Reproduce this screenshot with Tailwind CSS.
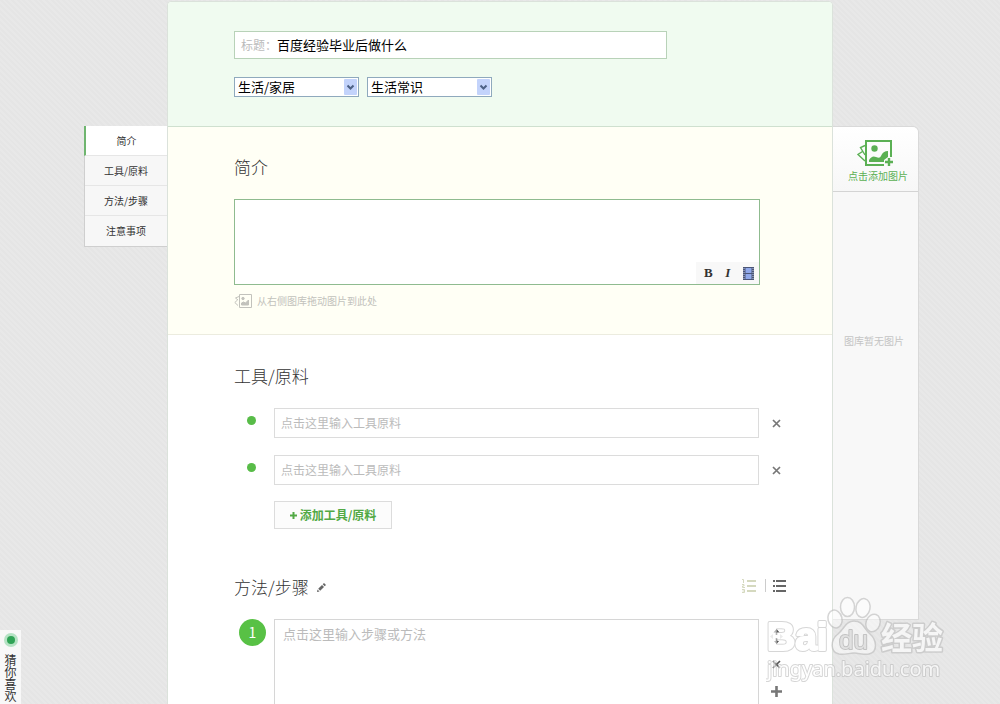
<!DOCTYPE html>
<html lang="zh-CN">
<head>
  <meta charset="UTF-8">
  <meta name="viewport" content="width=device-width, initial-scale=1.0">
  <title>百度经验</title>
  <script src="https://cdn.jsdelivr.net/npm/@tailwindcss/browser@4"></script>
</head>
<body class="min-h-screen bg-[#e6e6e6] bg-[repeating-linear-gradient(45deg,#e8e8e8_0px,#e8e8e8_2px,#e5e5e5_2px,#e5e5e5_4px)] font-['Noto_Sans_CJK_SC',sans-serif] text-xs text-[#333]">
  <div class="flex justify-center pl-[3px] pt-px">

    <!-- section nav -->
    <nav class="mt-[125px] w-[83px] shrink-0 self-start border-b border-l border-[#cfcfcf] bg-[#f7f7f7] text-[10px]">
      <a href="#intro" class="-ml-px flex h-[30px] items-center justify-center border-b border-l-2 border-b-[#e6e6e6] border-l-[#6fb56f] bg-white">简介</a>
      <a href="#tools" class="flex h-[30px] items-center justify-center border-b border-[#e6e6e6]">工具/原料</a>
      <a href="#steps" class="flex h-[30px] items-center justify-center border-b border-[#e6e6e6]">方法/步骤</a>
      <a href="#notes" class="flex h-[30px] items-center justify-center">注意事项</a>
    </nav>

    <!-- editor -->
    <main class="max-w-[666px] flex-1 rounded-t border border-[#dbe2db] bg-white">
      <header class="h-[125px] rounded-t border-b border-[#cfe0cf] bg-[#f0fbf0] pl-[66px] pr-[72px] pt-[29px]">
        <div class="flex h-[28px] w-full max-w-[433px] items-center border border-[#b8d2b8] bg-white pl-1.5">
          <label for="title" class="text-[12px] text-[#bbb]">标题：</label>
          <input id="title" type="text" value="百度经验毕业后做什么" class="min-w-0 flex-1 text-[13px] text-black outline-none">
        </div>
        <div class="mt-[18px] flex gap-2">
          <div class="relative">
            <select aria-label="分类" class="block h-5 w-[125px] appearance-none border border-[#8fa9bd] bg-white pl-[3px] text-[13px] leading-[18px] text-black">
              <option>生活/家居</option>
            </select>
            <svg class="pointer-events-none absolute right-[2px] top-[2px]" width="13" height="16" viewBox="0 0 13 16"><rect width="13" height="16" rx="1" fill="#c3d3fb"/><path d="M3.5 6.5l3 3 3-3" fill="none" stroke="#4d6185" stroke-width="2"/></svg>
          </div>
          <div class="relative">
            <select aria-label="子分类" class="block h-5 w-[125px] appearance-none border border-[#8fa9bd] bg-white pl-[3px] text-[13px] leading-[18px] text-black">
              <option>生活常识</option>
            </select>
            <svg class="pointer-events-none absolute right-[2px] top-[2px]" width="13" height="16" viewBox="0 0 13 16"><rect width="13" height="16" rx="1" fill="#c3d3fb"/><path d="M3.5 6.5l3 3 3-3" fill="none" stroke="#4d6185" stroke-width="2"/></svg>
          </div>
        </div>
      </header>

      <section id="intro" class="h-[208px] border-b border-[#ececdf] bg-[#fffff5] pl-[66px] pr-[72px] pt-[28px]">
        <h2 class="text-[17px] font-light leading-[24px]">简介</h2>
        <div class="mt-5 flex h-[86px] flex-col border border-[#8fbb8f] bg-white">
          <textarea aria-label="简介" class="min-h-0 flex-1 resize-none px-2 outline-none"></textarea>
          <div class="flex h-[22px] w-[63px] items-center justify-between self-end bg-[#f8f8f8] pl-2 pr-[5px] font-['Liberation_Serif',serif] text-[13px] font-bold">
            <button type="button" aria-label="粗体">B</button>
            <button type="button" aria-label="斜体" class="italic">I</button>
            <button type="button" aria-label="视频">
              <svg width="11" height="13" viewBox="0 0 11 13"><rect width="11" height="13" fill="#4a5578"/><path d="M2.5 1h6v5h-6zM2.5 7h6v5h-6z" fill="#90a8ea"/><path d="M1 1v12M10 1v12" stroke="#c4cbe0" stroke-dasharray="1 1"/></svg>
            </button>
          </div>
        </div>
        <p class="mt-[7px] flex items-center gap-1 text-[10px] leading-[18px] text-[#c2c2bc]">
          <svg width="19" height="14" viewBox="0 0 19 14" fill="none" stroke="#c2c2bc"><path d="M5.5 .5h12v13h-12z"/><path d="M5 2.500L1.500 4 4 6M3.500 6L.8 8.500 4 11.500"/><circle cx="9" cy="4.500" r="1.200" fill="#c2c2bc"/><path d="M7.500 11V9l2-1 2 1 3-3v5z" fill="#c2c2bc"/></svg>
          从右侧图库拖动图片到此处
        </p>
      </section>

      <section id="tools" class="pl-[66px] pr-[39px] pt-[29px]">
        <h2 class="text-[17px] font-light leading-[24px]">工具/原料</h2>
        <ul class="mt-5 flex flex-col gap-[17px]">
          <li class="flex h-[30px]">
            <div class="w-10 pl-[13px] pt-2"><div class="size-[9px] rounded-full bg-[#58bc48]"></div></div>
            <input type="text" aria-label="工具原料 1" placeholder="点击这里输入工具原料" class="min-w-0 flex-1 border border-[#dcdcdc] px-1.5 text-[12px] outline-none placeholder:text-[#bbb]">
            <button type="button" aria-label="删除" class="flex w-[34px] items-center justify-center"><svg width="9" height="9" viewBox="0 0 9 9"><path d="M1 1l7 7M8 1L1 8" stroke="#777" stroke-width="1.700"/></svg></button>
          </li>
          <li class="flex h-[30px]">
            <div class="w-10 pl-[13px] pt-2"><div class="size-[9px] rounded-full bg-[#58bc48]"></div></div>
            <input type="text" aria-label="工具原料 2" placeholder="点击这里输入工具原料" class="min-w-0 flex-1 border border-[#dcdcdc] px-1.5 text-[12px] outline-none placeholder:text-[#bbb]">
            <button type="button" aria-label="删除" class="flex w-[34px] items-center justify-center"><svg width="9" height="9" viewBox="0 0 9 9"><path d="M1 1l7 7M8 1L1 8" stroke="#777" stroke-width="1.700"/></svg></button>
          </li>
        </ul>
        <button type="button" class="ml-10 mt-4 flex h-[28px] w-[118px] items-center justify-center gap-[3px] border border-[#dcdcdc] bg-[#fcfcfc] text-[12px] font-bold text-[#52a944]">
          <svg width="7" height="7" viewBox="0 0 7 7"><path d="M3.500 0v7M0 3.500h7" stroke="#52a944" stroke-width="2"/></svg>
          添加工具/原料
        </button>
      </section>

      <section id="steps" class="pl-[66px] pr-[39px] pt-[46px]">
        <div class="flex items-center pr-[7px]">
          <h2 class="text-[17px] font-light leading-[24px]">方法/步骤</h2>
          <button type="button" aria-label="编辑" class="ml-2"><svg width="9" height="9" viewBox="0 0 9 9" fill="#666"><path d="M0 9l.5-2.500L2.500 8.500zM1.200 5.800L5 2l2 2-3.800 3.800zM5.700 1.300L7 0l2 2-1.300 1.300z"/></svg></button>
          <div class="ml-auto flex items-center pb-[3px]">
            <button type="button" aria-label="有序列表"><svg width="14" height="14" viewBox="0 0 14 14" stroke="#d5d9bf"><path d="M5 2h9M5 7h9M5 12h9" stroke-width="2"/><path d="M0 .5h1.500V4M0 5.500h2v1.500H.5v1.500H3M0 10.500h2.500v3H0M.5 12h2" fill="none"/></svg></button>
            <span class="ml-[9px] h-[13px] w-px bg-[#ccc]"></span>
            <button type="button" aria-label="无序列表" class="ml-[7px]"><svg width="13" height="12" viewBox="0 0 13 12" stroke="#666" stroke-width="2"><path d="M0 1h2M0 6h2M0 11h2M3 1h10M3 6h10M3 11h10"/></svg></button>
          </div>
        </div>
        <div class="mt-5 flex">
          <div class="w-10 pl-[5px]"><div class="flex size-[27px] items-center justify-center rounded-full bg-[#58c145] text-[14px] text-white">1</div></div>
          <textarea aria-label="步骤 1" placeholder="点击这里输入步骤或方法" class="h-[85px] min-w-0 flex-1 resize-none border border-b-0 border-[#d6d6d6] px-2 py-1 text-[13px] leading-[20px] outline-none placeholder:text-[#bbb]"></textarea>
          <div class="flex w-[34px] flex-col items-center pt-2.5">
            <button type="button" aria-label="移动"><svg width="13" height="15" viewBox="0 0 13 15"><path d="M6.500 0l3 3.500h-6zM6.500 15l2.500-3H4zM5.700 3h1.600v3H5.700zM5.700 9h1.600v3H5.700z" fill="#444"/><path d="M0 7.500l3-2.500v5zM13 7.500L10 5v5z" fill="#ccc"/></svg></button>
            <button type="button" aria-label="删除" class="mt-4"><svg width="9" height="9" viewBox="0 0 9 9"><path d="M1 1l7 7M8 1L1 8" stroke="#555" stroke-width="1.700"/></svg></button>
            <button type="button" aria-label="添加" class="mt-[17px]"><svg width="11" height="11" viewBox="0 0 11 11"><path d="M5.500 0v11M0 5.500h11" stroke="#777" stroke-width="2.600"/></svg></button>
          </div>
        </div>
      </section>
    </main>

    <!-- picture library -->
    <aside class="mt-[125px] flex h-[494px] w-[86px] shrink-0 flex-col rounded-tr-md border border-l-0 border-[#d9d9d9] bg-[#f8f8f8] text-[10px]">
      <button type="button" class="flex h-[65px] flex-col items-center rounded-tr-md border-b border-[#d4d4d4] bg-linear-to-b from-white to-[#f7f7f7] pl-[5px] pt-[13px] text-[#5bb054]">
        <svg class="mr-1.5" width="37" height="27" viewBox="0 0 37 27" fill="none" stroke="#5bb054"><path d="M34 17V1H9v24h18" stroke-width="2"/><path d="M8 5.500L3.500 7.500 8 15M5.500 11.500L1 14.500l7 6.500" stroke-width="1.400"/><circle cx="17.500" cy="8.500" r="3.200" fill="#5bb054" stroke="none"/><path d="M12 22v-2q3-5 7-3t5-1q2-5 7-5v6l-4 3v2z" fill="#5bb054" stroke="none"/><path d="M32 18v8M28 22h8" stroke-width="2.400"/></svg>
        <span class="leading-[18px]">点击添加图片</span>
      </button>
      <p class="pr-[3px] pt-[140px] text-center leading-[18px] text-[#c4c4c4]">图库暂无图片</p>
    </aside>
  </div>

  <!-- floating recommendation tab -->
  <a href="#" class="fixed bottom-0 left-0 flex h-[74px] w-[21px] flex-col items-center bg-[#f8f8f8] pt-[3px] text-[12px] leading-[12px]">
    <span class="mb-[7px] flex size-[14px] shrink-0 items-center justify-center rounded-full bg-[#b5e3c4]"><span class="size-2 rounded-full bg-[#2fa356]"></span></span>
    <span class="w-3">猜你喜欢</span>
  </a>

  <!-- watermark -->
  <svg class="pointer-events-none fixed bottom-[18px] right-[50px] opacity-60" width="184" height="90" viewBox="0 0 184 90" fill="#fff" stroke="#bbb" stroke-linejoin="round">
    <text x="1" y="54" font-family="Liberation Sans, sans-serif" font-size="39" font-weight="bold" stroke-width="4" paint-order="stroke">Bai</text>
    <text x="1" y="54" font-family="Liberation Sans, sans-serif" font-size="39" font-weight="bold" stroke="#fff" stroke-width="2">Bai</text>
    <g stroke-width="1.500" fill-opacity=".8">
      <path d="M88 25C80 25 78 33 72 38C64 44 64 56 73 58C79 59 83 57 88 57S98 59 103 58C112 56 111 44 104 38C98 33 97 25 88 25Z"/>
      <ellipse cx="69" cy="23" rx="7" ry="9" transform="rotate(-15 69 23)"/>
      <ellipse cx="81.500" cy="11" rx="7" ry="9.500"/>
      <ellipse cx="97" cy="12" rx="7" ry="9.500" transform="rotate(12 97 12)"/>
      <ellipse cx="107" cy="27" rx="7" ry="9" transform="rotate(20 107 27)"/>
    </g>
    <text x="73" y="53" font-family="Liberation Sans, sans-serif" font-size="26" fill="#ddd" stroke="#aaa" stroke-width="2" paint-order="stroke">du</text>
    <text x="115" y="53" font-family="Noto Sans CJK SC, sans-serif" font-size="31" font-weight="bold" stroke-width="3" paint-order="stroke">经验</text>
    <text x="1" y="80" font-family="Noto Sans, sans-serif" font-size="20" stroke-width="2" paint-order="stroke">jingyan.baidu.com</text>
  </svg>
</body>
</html>
